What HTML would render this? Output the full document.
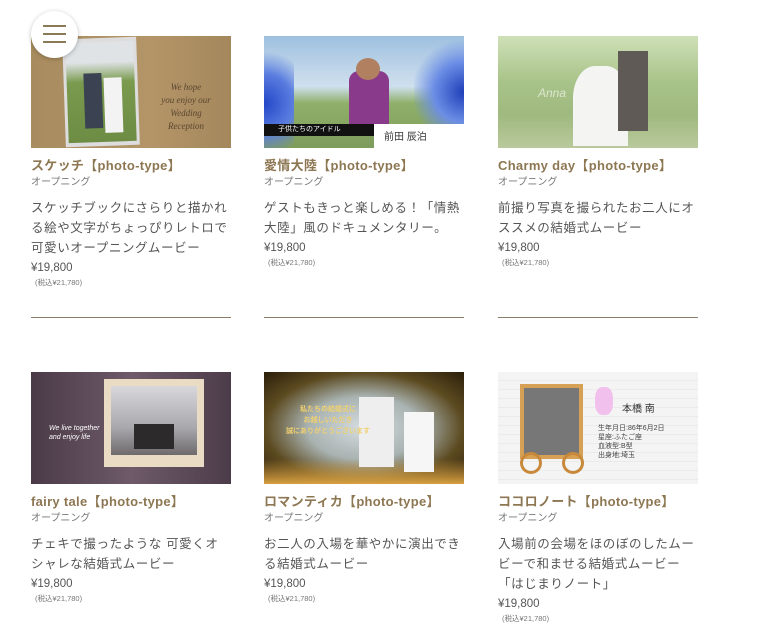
<!DOCTYPE html>
<html><head><meta charset="utf-8"><style>
*{margin:0;padding:0;box-sizing:border-box}
body{width:766px;height:626px;background:#fff;position:relative;overflow:hidden;font-family:"Liberation Sans","Noto Sans CJK JP",sans-serif;color:#555}
.c{position:absolute;width:200px}
.img{width:200px;height:112px;position:relative;overflow:hidden}
.t{font-size:13px;font-weight:bold;color:#8d7753;margin-top:9px;line-height:18px;letter-spacing:.3px}
.s{font-size:10px;color:#777;line-height:14px;margin-top:1px}
.d{font-size:12.5px;line-height:20px;margin-top:8px;letter-spacing:.6px;color:#555}
.p{font-size:11.5px;line-height:20px;color:#555}
.x{font-size:7.5px;color:#777;margin-left:4px;line-height:10px}
.l{position:absolute;width:200px;height:1px;background:#8b7d6b}
.menu{position:absolute;left:31px;top:11px;width:47px;height:47px;border-radius:50%;background:#fff;box-shadow:0 1px 5px rgba(0,0,0,.25);z-index:5}
.menu i{position:absolute;left:12px;width:23px;height:2px;background:#8b7a58}
</style></head><body>
<div class="menu"><i style="top:14px"></i><i style="top:22px"></i><i style="top:30px"></i></div>

<div class="c" style="left:31px;top:36px">
<div class="img" style="background:linear-gradient(90deg,#a88c5f,#b39568 60%,#a4875c)">
<div style="position:absolute;left:33px;top:2px;width:74px;height:108px;background:#ddd;transform:rotate(-2deg)"><div style="position:absolute;left:3px;top:4px;right:3px;bottom:4px;background:linear-gradient(#dfe3e6 20%,#7a9a4e 40%,#6d8c44)"></div><div style="position:absolute;left:20px;top:35px;width:18px;height:55px;background:#3b4352"></div><div style="position:absolute;left:40px;top:40px;width:18px;height:55px;background:#f3f3f3"></div></div>
<div style="position:absolute;left:125px;top:45px;font-size:9px;color:#5a4630;line-height:13px;text-align:center;width:60px;font-family:'Liberation Serif',serif;font-style:italic">We hope<br>you enjoy our<br>Wedding Reception</div>
</div>
<div class="t">スケッチ【photo-type】</div><div class="s">オープニング</div>
<div class="d">スケッチブックにさらりと描かれる絵や文字がちょっぴりレトロで可愛いオープニングムービー</div>
<div class="p">¥19,800</div><div class="x">(税込¥21,780)</div>
</div>

<div class="c" style="left:264px;top:36px">
<div class="img" style="background:linear-gradient(#9fc0e0,#cfe0ee 45%,#8fb06a 60%,#7e9c5c)">
<div style="position:absolute;left:0;top:0;width:30px;height:112px;background:radial-gradient(circle at 0 60%,#2346c8,#5a7de0 40%,transparent 70%)"></div>
<div style="position:absolute;right:0;top:0;width:50px;height:112px;background:radial-gradient(circle at 100% 50%,#1e3fb8,#6b8de5 40%,transparent 70%)"></div>
<div style="position:absolute;left:85px;top:35px;width:40px;height:60px;background:#8a3a8a;border-radius:10px 10px 0 0"></div>
<div style="position:absolute;left:92px;top:22px;width:24px;height:22px;background:#b08060;border-radius:50%"></div>
<div style="position:absolute;left:0;top:88px;width:110px;height:12px;background:#111;color:#fff;font-size:7px;line-height:12px;padding-left:14px">子供たちのアイドル</div>
<div style="position:absolute;left:110px;top:88px;width:90px;height:24px;background:#fff;font-size:10px;color:#333;padding:4px 0 0 10px">前田 辰泊</div>
</div>
<div class="t">愛情大陸【photo-type】</div><div class="s">オープニング</div>
<div class="d">ゲストもきっと楽しめる！「情熱大陸」風のドキュメンタリー。</div>
<div class="p">¥19,800</div><div class="x">(税込¥21,780)</div>
</div>

<div class="c" style="left:498px;top:36px">
<div class="img" style="background:linear-gradient(#cfe0b8,#a9c48a 40%,#9fb97f 70%,#b9c99c)">
<div style="position:absolute;left:75px;top:30px;width:55px;height:80px;background:#f4f4f2;border-radius:40% 40% 0 0"></div>
<div style="position:absolute;left:120px;top:15px;width:30px;height:80px;background:#5f5a55"></div>
<div style="position:absolute;left:40px;top:50px;font-size:12px;color:rgba(255,255,255,.6);font-style:italic">Anna</div>
</div>
<div class="t">Charmy day【photo-type】</div><div class="s">オープニング</div>
<div class="d">前撮り写真を撮られたお二人にオススメの結婚式ムービー</div>
<div class="p">¥19,800</div><div class="x">(税込¥21,780)</div>
</div>

<div class="l" style="left:31px;top:317px"></div>
<div class="l" style="left:264px;top:317px"></div>
<div class="l" style="left:498px;top:317px"></div>

<div class="c" style="left:31px;top:372px">
<div class="img" style="background:linear-gradient(90deg,#4a3a48,#6e5a68 50%,#4c3c4a)">
<div style="position:absolute;left:73px;top:7px;width:100px;height:88px;background:#eadcc4"><div style="position:absolute;left:7px;top:7px;right:7px;bottom:12px;background:linear-gradient(#d8d8dc,#a9a8ad 60%,#6e6a6c)"></div><div style="position:absolute;left:30px;top:45px;width:40px;height:25px;background:#2d2a2c"></div></div>
<div style="position:absolute;left:18px;top:52px;font-size:7px;color:#fff;line-height:9px;font-style:italic">We live together<br>and enjoy life</div>
</div>
<div class="t">fairy tale【photo-type】</div><div class="s">オープニング</div>
<div class="d">チェキで撮ったような 可愛くオシャレな結婚式ムービー</div>
<div class="p">¥19,800</div><div class="x">(税込¥21,780)</div>
</div>

<div class="c" style="left:264px;top:372px">
<div class="img" style="background:radial-gradient(ellipse at 50% 50%,#d6dde0 0,#a8b2b0 40%,#5c4a20 70%,#2a1e0a)">
<div style="position:absolute;left:0;bottom:0;width:200px;height:25px;background:linear-gradient(transparent,#d8a040)"></div>
<div style="position:absolute;left:95px;top:25px;width:35px;height:70px;background:#eee"></div>
<div style="position:absolute;left:140px;top:40px;width:30px;height:60px;background:#f6f6f6"></div>
<div style="position:absolute;left:22px;top:32px;font-size:7px;color:#f0d070;line-height:11px;text-align:center;font-weight:bold">私たちの結婚式に<br>お越しいただき<br>誠にありがとうございます</div>
</div>
<div class="t">ロマンティカ【photo-type】</div><div class="s">オープニング</div>
<div class="d">お二人の入場を華やかに演出できる結婚式ムービー</div>
<div class="p">¥19,800</div><div class="x">(税込¥21,780)</div>
</div>

<div class="c" style="left:498px;top:372px">
<div class="img" style="background:repeating-linear-gradient(#f4f4f4 0,#f4f4f4 8px,#e2e2e2 9px)">
<div style="position:absolute;left:22px;top:12px;width:63px;height:75px;border:4px solid #d6a055;background:#777"></div>
<div style="position:absolute;left:22px;top:80px;width:22px;height:22px;border:3px solid #c8893a;border-radius:50%"></div>
<div style="position:absolute;left:64px;top:80px;width:22px;height:22px;border:3px solid #c8893a;border-radius:50%"></div>
<div style="position:absolute;left:97px;top:15px;width:18px;height:28px;background:#f2c0ec;border-radius:40%"></div>
<div style="position:absolute;left:124px;top:28px;font-size:10px;color:#333">本橋 南</div>
<div style="position:absolute;left:100px;top:52px;font-size:7px;color:#444;line-height:9px">生年月日:86年6月2日<br>星座:ふたご座<br>血液型:B型<br>出身地:埼玉</div>
</div>
<div class="t">ココロノート【photo-type】</div><div class="s">オープニング</div>
<div class="d">入場前の会場をほのぼのしたムービーで和ませる結婚式ムービー「はじまりノート」</div>
<div class="p">¥19,800</div><div class="x">(税込¥21,780)</div>
</div>
</body></html>
